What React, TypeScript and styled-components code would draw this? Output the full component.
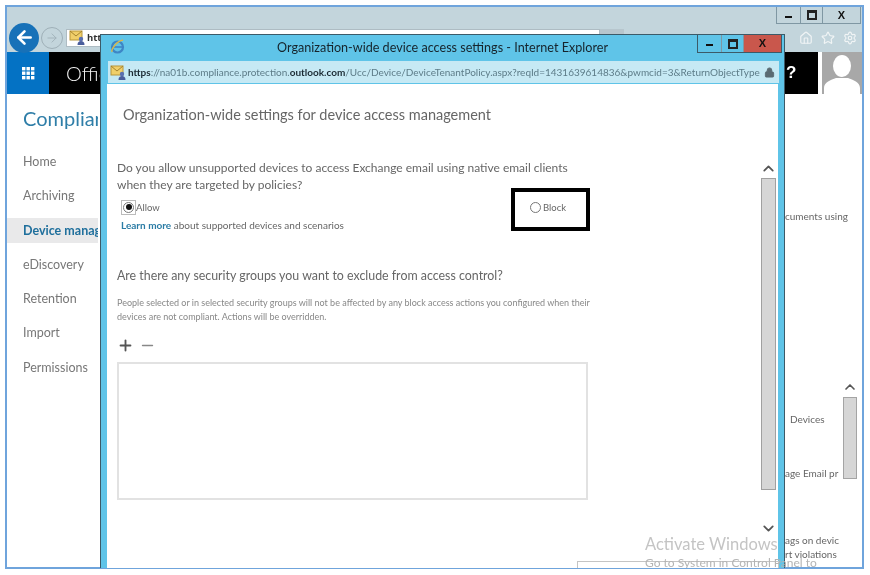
import React from 'react';
import styled, { createGlobalStyle } from 'styled-components';
import { ArrowLeft, ArrowRight, ChevronDown, ChevronUp, Home, Lock, Minus, Plus, Settings, Star } from 'lucide-react';

const GlobalStyle = createGlobalStyle`
  html, body { margin: 0; padding: 0; background: #fff; }
  body { font-family: Lato, "Open Sans", sans-serif; }
`;

const Screen = styled.div`
  position: relative;
  width: 870px;
  height: 575px;
  overflow: hidden;
  background: #fff;
`;

const Soft = styled.div`
  box-sizing: border-box;
  width: 870px;
  height: 575px;
  padding: 5px 0 0 5px;
  filter: blur(0.45px);
`;

const BrowserWindow = styled.div`
  box-sizing: border-box;
  display: flex;
  flex-direction: column;
  width: 859px;
  height: 564px;
  border: 2px solid #6fa4dc;
  overflow: hidden;
  background: #fff;
`;

const Chrome = styled.div`
  position: relative;
  display: flex;
  align-items: center;
  flex: none;
  height: 45px;
  padding: 16px 0 0 2px;
  box-sizing: border-box;
  background: #c3d5dc;
`;

const WindowButtons = styled.div`
  position: absolute;
  top: 0;
  right: 1px;
  display: flex;
  height: 16px;
  border: 1px solid #7f97a3;
  border-top: 0;
`;

const WindowButton = styled.div<{ $w: number; $bg?: string }>`
  box-sizing: border-box;
  display: flex;
  align-items: center;
  justify-content: center;
  width: ${p => p.$w}px;
  background: ${p => p.$bg || 'transparent'};
  color: #111;
  border-left: 1px solid #7f97a3;
  &:first-child { border-left: 0; }
`;

const Dash = styled.span`
  width: 7px;
  height: 2px;
  background: #111;
  margin-top: 3px;
`;

const Restore = styled.span`
  width: 6px;
  height: 5px;
  border: 2px solid #222;
  border-top-width: 3px;
`;

const CloseX = styled.span`
  font: 700 11px "Liberation Sans", sans-serif;
  line-height: 1;
`;

const BackButton = styled.div`
  display: flex;
  align-items: center;
  justify-content: center;
  flex: none;
  width: 30px;
  height: 30px;
  border-radius: 50%;
  background: #1771b8;
  color: #fff;
`;

const ForwardButton = styled.div`
  display: flex;
  align-items: center;
  justify-content: center;
  flex: none;
  box-sizing: border-box;
  width: 22px;
  height: 22px;
  margin: 0 3px 0 2px;
  border-radius: 50%;
  border: 1px solid #9fb0b8;
  color: #9fb0b8;
`;

const AddressBar = styled.div`
  display: flex;
  align-items: center;
  gap: 1px;
  box-sizing: border-box;
  width: 534px;
  height: 18px;
  padding-left: 2px;
  background: #fff;
  border: 1px solid #aebcc3;
  font-family: "Open Sans", sans-serif;
  font-size: 9.5px;
  font-weight: 700;
  color: #333;
`;

const AddressTail = styled.div`
  width: 24px;
  height: 18px;
  background: #b7c6cd;
`;

const ToolIcons = styled.div`
  display: flex;
  align-items: center;
  gap: 8px;
  margin-left: auto;
  padding-right: 5px;
  color: #f0f4f5;
`;

const OfficeBar = styled.div`
  display: flex;
  flex: none;
  height: 42px;
  background: #fff;
`;

const Waffle = styled.div`
  display: flex;
  align-items: center;
  justify-content: center;
  width: 42px;
  background: #0472c4;
`;

const OfficeTitle = styled.div`
  flex: 1;
  padding-left: 17px;
  background: #000;
  color: #f2f2f2;
  font-size: 20px;
  line-height: 42px;
  font-weight: 300;
`;

const HelpMark = styled.div`
  width: 32px;
  background: #000;
  color: #fff;
  font: 700 17px/42px "Liberation Sans", sans-serif;
`;

const Avatar = styled.div`
  display: flex;
  justify-content: center;
  width: 40px;
  margin-left: 4px;
  background: #a8a8a8;
  overflow: hidden;
`;

const Body = styled.div`
  display: flex;
  flex: 1;
  min-height: 0;
`;

const Sidebar = styled.nav`
  flex: none;
  width: 91px;
  overflow: hidden;
  white-space: nowrap;
`;

const SideTitle = styled.div`
  padding: 10px 0 0 16px;
  height: 28px;
  font-size: 20px;
  line-height: 28px;
  color: #2f7ea8;
  margin-bottom: 17px;
`;

const NavItem = styled.div<{ $active?: boolean }>`
  height: 25px;
  margin-bottom: 9.3px;
  padding-left: 16px;
  font-size: 12.5px;
  line-height: 25px;
  color: ${p => (p.$active ? '#1f6f9c' : '#777')};
  font-weight: ${p => (p.$active ? 700 : 400)};
  background: ${p => (p.$active ? '#e9e9ea' : 'transparent')};
`;

const BehindPane = styled.div`
  display: flex;
  flex-direction: column;
  flex: none;
  width: 77px;
  margin-left: auto;
  overflow: hidden;
  font-size: 10px;
  color: #666;
  white-space: nowrap;
`;

const BehindText = styled.div<{ $top: number; $indent?: number }>`
  margin-top: ${p => p.$top}px;
  padding-left: ${p => p.$indent || 0}px;
  line-height: 14px;
`;

const Rule = styled.div<{ $top: number }>`
  width: 72px;
  height: 1px;
  margin-top: ${p => p.$top}px;
  background: #dedede;
`;

const BehindList = styled.div`
  display: flex;
  margin-top: 10px;
`;

const BehindRows = styled.div`
  flex: 1;
  min-width: 0;
  overflow: hidden;
`;

const BehindScroll = styled.div`
  display: flex;
  flex-direction: column;
  align-items: center;
  flex: none;
  width: 15px;
  margin-right: 5px;
  color: #555;
`;

const BehindThumb = styled.div`
  box-sizing: border-box;
  width: 14px;
  height: 82px;
  margin: 2px 0 84px;
  background: #d6d6d6;
  border: 1px solid #a4a4a4;
`;

const Popup = styled.div`
  position: absolute;
  left: 100px;
  top: 34px;
  box-sizing: border-box;
  display: flex;
  flex-direction: column;
  width: 685px;
  height: 534px;
  background: #5fc4e8;
  border: 1px solid #3c5a68;
  border-bottom: 0;
  overflow: hidden;
`;

const Caption = styled.div`
  position: relative;
  display: flex;
  align-items: center;
  justify-content: center;
  flex: none;
  height: 24px;
  font-size: 12.6px;
  color: #16242c;
`;

const IeLogo = styled.svg`
  position: absolute;
  left: 8px;
  top: 3px;
`;

const PopupButtons = styled.div`
  position: absolute;
  top: 0;
  right: 2px;
  display: flex;
  height: 17px;
  border: 1px solid #3c5a68;
  border-top: 0;
`;

const UrlBar = styled.div`
  display: flex;
  align-items: center;
  flex: none;
  height: 22px;
  margin: 2px 5px 0 7px;
  padding: 0 4px 0 2px;
  background: #c6e9f4;
  font-size: 10px;
  color: #5d7c88;
  white-space: nowrap;
  overflow: hidden;
`;

const UrlStrong = styled.b`
  color: #1b2a33;
  font-weight: 700;
`;

const UrlText = styled.span`
  flex: 1;
  margin-left: 1px;
  overflow: hidden;
`;

const Content = styled.div`
  position: relative;
  flex: 1;
  margin: 1px 6px 0 6px;
  padding: 0 0 0 10px;
  background: #fff;
  color: #666;
`;

const PageTitle = styled.h1`
  margin: 0 0 0 6px;
  padding-top: 21px;
  font-size: 14.5px;
  line-height: 20px;
  font-weight: 400;
  color: #666;
`;

const Question = styled.p`
  margin: 34px 0 0;
  font-size: 12px;
  line-height: 17px;
  color: #666;
  white-space: nowrap;
`;

const RadioRow = styled.div`
  display: flex;
  align-items: center;
  width: 470px;
  height: 16px;
  margin: 6px 0 0 4px;
  font-size: 9.5px;
  color: #666;
`;

const RadioFocus = styled.span`
  display: flex;
  align-items: center;
  justify-content: center;
  box-sizing: border-box;
  width: 15px;
  height: 15px;
  border: 1px solid #bbb;
`;

const Radio = styled.span<{ $on?: boolean }>`
  display: flex;
  align-items: center;
  justify-content: center;
  box-sizing: border-box;
  width: 11px;
  height: 11px;
  border-radius: 50%;
  border: 1px solid #777;
  background: #fff;
  &::after {
    content: '';
    display: ${p => (p.$on ? 'block' : 'none')};
    width: 6px;
    height: 6px;
    border-radius: 50%;
    background: #111;
  }
`;

const BlockOption = styled.span`
  display: flex;
  align-items: center;
  gap: 2px;
  margin-left: auto;
  margin-right: 25px;
`;

const LearnLine = styled.div`
  margin: 3px 0 0 4px;
  font-size: 10px;
  line-height: 14px;
  color: #666;
`;

const LearnLink = styled.a`
  color: #2b7ca5;
  font-weight: 700;
`;

const Subhead = styled.h2`
  margin: 34px 0 0;
  font-size: 12.4px;
  line-height: 20px;
  font-weight: 400;
  color: #666;
`;

const Fine = styled.p`
  margin: 10px 0 0;
  font-size: 9px;
  line-height: 14px;
  color: #888;
  white-space: nowrap;
`;

const ActionRow = styled.div`
  display: flex;
  align-items: center;
  gap: 5px;
  height: 16px;
  margin: 13px 0 0 0;
  color: #555;
`;

const ListBox = styled.div`
  box-sizing: border-box;
  width: 471px;
  height: 138px;
  margin-top: 9px;
  border: 2px solid #e2e2e2;
`;

const ContentScroll = styled.div`
  position: absolute;
  top: 76px;
  right: 2px;
  display: flex;
  flex-direction: column;
  align-items: center;
  width: 16px;
  color: #555;
`;

const ContentThumb = styled.div`
  box-sizing: border-box;
  width: 15px;
  height: 312px;
  margin: 1px 0 30px;
  background: #d6d6d6;
  border: 1px solid #a0a0a0;
`;

const BottomStub = styled.div`
  position: absolute;
  left: 470px;
  top: 477px;
  width: 200px;
  height: 12px;
  border: 1px solid #c4c4c4;
`;

const Callout = styled.div`
  position: absolute;
  left: 511px;
  top: 188px;
  box-sizing: border-box;
  width: 79px;
  height: 43px;
  border: 4px solid #000;
`;

const Watermark = styled.div`
  position: absolute;
  left: 645px;
  top: 533px;
  height: 35px;
  overflow: hidden;
  white-space: nowrap;
  color: #c4c4c4;
  font-size: 16.5px;
  line-height: 22px;
`;

const WatermarkSub = styled.div`
  font-size: 12px;
  line-height: 15px;
  color: #b4b4b4;
`;

const UrlIcon = () => (
  <svg width="17" height="15" viewBox="0 0 17 15">
    <rect x="1" y="1" width="12" height="9" fill="#f0cf6a" stroke="#b8963a" />
    <path d="M1 1l6 5 6-5" fill="none" stroke="#a5842f" />
    <circle cx="12" cy="9" r="2.2" fill="#5a6fb0" />
    <path d="M8.5 15c0-3 1.5-4 3.5-4s3.5 1 3.5 4z" fill="#4a5d9c" />
  </svg>
);

const WaffleIcon = () => (
  <svg width="13" height="13" viewBox="0 0 13 13" fill="#fff">
    {[0, 4.5, 9].flatMap(x =>
      [0, 4.5, 9].map(y => <rect key={`${x}-${y}`} x={x} y={y} width="3.4" height="3.4" />)
    )}
  </svg>
);

const AvatarIcon = () => (
  <svg width="36" height="42" viewBox="0 0 36 42" fill="#fff">
    <ellipse cx="18" cy="14" rx="9" ry="11" />
    <path d="M0 42v-6c0-6 7-8 12-10h12c5 2 12 4 12 10v6z" />
  </svg>
);

const navItems = ['Home', 'Archiving', 'Device management', 'eDiscovery', 'Retention', 'Import', 'Permissions'];

const App: React.FC = () => (
  <Screen>
    <GlobalStyle />
    <Soft>
      <BrowserWindow>
        <Chrome>
          <WindowButtons>
            <WindowButton $w={23}><Dash /></WindowButton>
            <WindowButton $w={22}><Restore /></WindowButton>
            <WindowButton $w={38}><CloseX>X</CloseX></WindowButton>
          </WindowButtons>
          <BackButton><ArrowLeft size={21} strokeWidth={3} /></BackButton>
          <ForwardButton><ArrowRight size={14} strokeWidth={1.5} /></ForwardButton>
          <AddressBar><UrlIcon />htt</AddressBar>
          <AddressTail />
          <ToolIcons>
            <Home size={14} />
            <Star size={14} />
            <Settings size={14} />
          </ToolIcons>
        </Chrome>
        <OfficeBar>
          <Waffle><WaffleIcon /></Waffle>
          <OfficeTitle>Office 365</OfficeTitle>
          <HelpMark>?</HelpMark>
          <Avatar><AvatarIcon /></Avatar>
        </OfficeBar>
        <Body>
          <Sidebar>
            <SideTitle>Compliance</SideTitle>
            {navItems.map((item, i) => (
              <NavItem key={item} $active={i === 2}>{item}</NavItem>
            ))}
          </Sidebar>
          <BehindPane>
            <BehindText $top={115}>cuments using</BehindText>
            <Rule $top={121} />
            <Rule $top={25} />
            <BehindList>
              <BehindRows>
                <BehindText $top={33} $indent={5}>Devices</BehindText>
                <BehindText $top={40}>age Email pr</BehindText>
                <BehindText $top={53}>ags on devic</BehindText>
                <BehindText $top={0}>rt violations</BehindText>
              </BehindRows>
              <BehindScroll>
                <ChevronUp size={16} strokeWidth={2.5} />
                <BehindThumb />
                <ChevronDown size={16} strokeWidth={2.5} />
              </BehindScroll>
            </BehindList>
          </BehindPane>
        </Body>
      </BrowserWindow>

      <Popup>
        <Caption>
          <IeLogo width="17" height="17" viewBox="0 0 17 17">
            <ellipse cx="8.5" cy="9" rx="5.5" ry="5.5" fill="none" stroke="#3d86c6" strokeWidth="2.2" />
            <path d="M3 9h10" stroke="#3d86c6" strokeWidth="1.6" />
            <path d="M3 14C2 11 8 3 14 2" fill="none" stroke="#d8b64a" strokeWidth="1.4" />
          </IeLogo>
          Organization-wide device access settings - Internet Explorer
          <PopupButtons>
            <WindowButton $w={23}><Dash /></WindowButton>
            <WindowButton $w={22}><Restore /></WindowButton>
            <WindowButton $w={38} $bg="#c9574c"><CloseX>X</CloseX></WindowButton>
          </PopupButtons>
        </Caption>
        <UrlBar>
          <UrlIcon />
          <UrlText>
            <UrlStrong>https</UrlStrong>://na01b.compliance.protection.<UrlStrong>outlook.com</UrlStrong>/Ucc/Device/DeviceTenantPolicy.aspx?reqId=1431639614836&amp;pwmcid=3&amp;ReturnObjectType
          </UrlText>
          <Lock size={11} fill="#5b6b73" color="#5b6b73" />
        </UrlBar>
        <Content>
          <PageTitle>Organization-wide settings for device access management</PageTitle>
          <Question>
            Do you allow unsupported devices to access Exchange email using native email clients
            <br />
            when they are targeted by policies?
          </Question>
          <RadioRow>
            <RadioFocus><Radio $on /></RadioFocus>
            Allow
            <BlockOption><Radio />Block</BlockOption>
          </RadioRow>
          <LearnLine><LearnLink>Learn more</LearnLink> about supported devices and scenarios</LearnLine>
          <Subhead>Are there any security groups you want to exclude from access control?</Subhead>
          <Fine>
            People selected or in selected security groups will not be affected by any block access actions you configured when their
            <br />
            devices are not compliant. Actions will be overridden.
          </Fine>
          <ActionRow>
            <Plus size={17} strokeWidth={2.6} />
            <Minus size={17} strokeWidth={2} color="#888" />
          </ActionRow>
          <ListBox />
          <ContentScroll>
            <ChevronUp size={17} strokeWidth={2.5} />
            <ContentThumb />
            <ChevronDown size={17} strokeWidth={2.5} />
          </ContentScroll>
          <BottomStub />
        </Content>
      </Popup>

      <Watermark>
        Activate Windows
        <WatermarkSub>Go to System in Control Panel to</WatermarkSub>
      </Watermark>
    </Soft>
    <Callout />
  </Screen>
);

export default App;
